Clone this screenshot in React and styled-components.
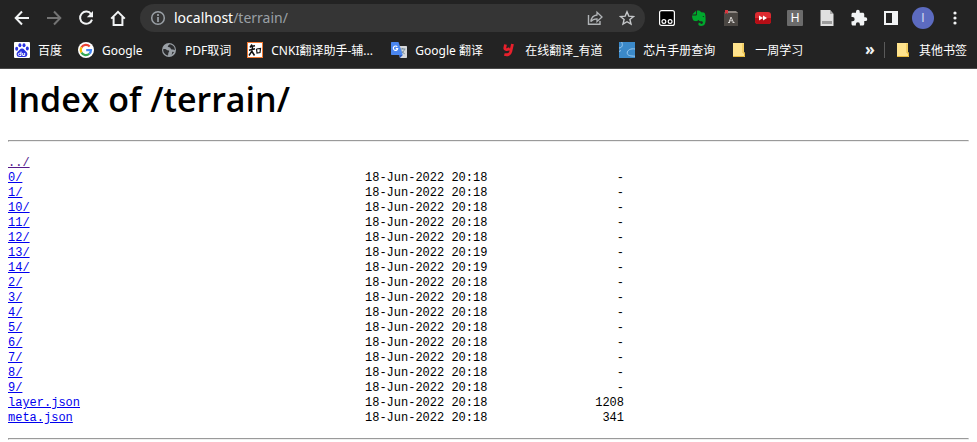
import React from 'react';
import styled, { createGlobalStyle } from 'styled-components';

const GlobalStyle = createGlobalStyle`
  body {
    margin: 0;
    background-color: #ffffff;
    color: #000000;
    font-family: 'Noto Sans', 'Noto Sans CJK SC', sans-serif;
  }
`;

const Chrome = styled.header`
  background-color: #232323;
  border-bottom: 1px solid #4a4a4a;
`;

const Toolbar = styled.div`
  display: flex;
  align-items: center;
  height: 36px;
  padding: 0 6px;
`;

const IconButton = styled.button`
  display: flex;
  flex: none;
  align-items: center;
  justify-content: center;
  width: 32px;
  height: 28px;
  padding: 0;
  border: 0;
  background: none;
  color: ${(props) => props.$color || '#f1f3f4'};
`;

const AddressBar = styled.div`
  display: flex;
  flex: 1;
  align-items: center;
  min-width: 0;
  height: 28px;
  margin: 0 6px;
  padding: 0 2px;
  border-radius: 14px;
  background-color: #353535;
`;

const Url = styled.a`
  flex: 1;
  color: #9aa0a6;
  font-size: 14px;
  line-height: 20px;
  text-decoration: none;
`;

const Host = styled.span`
  color: #ffffff;
`;

const Avatar = styled.span`
  width: 22px;
  border-radius: 50%;
  background-color: #5c6bc0;
  color: #d5d9f0;
  font-family: 'Liberation Sans', sans-serif;
  font-size: 12px;
  line-height: 22px;
`;

const HBadge = styled.span`
  width: 16px;
  border-radius: 1px;
  background-color: #6b6b6b;
  color: #ffffff;
  font-family: 'Liberation Sans', sans-serif;
  font-size: 12px;
  line-height: 16px;
`;

const BookmarksBar = styled.nav`
  display: flex;
  align-items: center;
  height: 28px;
  padding: 0 2px 4px 6px;
`;

const Bookmark = styled.a`
  display: flex;
  flex: none;
  align-items: center;
  gap: 8px;
  padding: 0 8px;
  color: #ffffff;
  font-size: 12px;
  line-height: 18px;
  text-decoration: none;
  white-space: nowrap;
`;

const BookmarkName = styled.span`
  min-width: ${(props) => props.$width}px;
  padding-top: 2px;
`;

const More = styled.button`
  flex: none;
  width: 20px;
  margin-left: auto;
  padding: 0 0 2px;
  border: 0;
  background: none;
  color: #f1f3f4;
  font-family: 'Noto Sans', sans-serif;
  font-size: 16px;
  font-weight: bold;
  line-height: 16px;
`;

const Divider = styled.span`
  flex: none;
  width: 1px;
  height: 16px;
  margin: 0 2px 0 4px;
  background-color: #5a5a5a;
`;

const Page = styled.main`
  padding: 8px;
`;

const Title = styled.h1`
  margin: 0;
  padding-top: 2px;
  font-family: 'Open Sans', sans-serif;
  font-size: 34px;
  font-weight: 600;
  line-height: 40px;
`;

const Rule = styled.hr`
  height: 0;
  margin: ${(props) => props.$top}px 0 13px;
  border: 1px solid;
  border-color: #9a9a9a #eeeeee #eeeeee #9a9a9a;
`;

const Listing = styled.table`
  width: 616px;
  border-collapse: collapse;
  table-layout: fixed;
  font-family: 'Liberation Mono', monospace;
  font-size: 12px;
  line-height: 13px;
`;

const Cell = styled.td`
  width: ${(props) => props.$width};
  height: 13px;
  padding: 2px 0 0;
  text-align: ${(props) => props.$align || 'left'};
  white-space: nowrap;
`;

const FileLink = styled.a`
  color: ${(props) => (props.$visited ? '#551a8b' : '#0000ee')};
`;

const Svg = ({ size = 16, box = 16, children }) => (
  <svg width={size} height={size} viewBox={`0 0 ${box} ${box}`} fill="none" aria-hidden="true">
    {children}
  </svg>
);

const BackIcon = () => (
  <Svg>
    <path d="M15 8H2M8 1.5 1.7 8 8 14.5" stroke="currentColor" strokeWidth="2" />
  </Svg>
);

const ForwardIcon = () => (
  <Svg>
    <path d="M1 8h13M8 1.5 14.3 8 8 14.5" stroke="currentColor" strokeWidth="2" />
  </Svg>
);

const ReloadIcon = () => (
  <Svg>
    <path d="M13.2 4.2A6.1 6.1 0 1 0 14 9.6" stroke="currentColor" strokeWidth="2" />
    <path d="M15 1v6.2H8.8z" fill="currentColor" />
  </Svg>
);

const HomeIcon = () => (
  <Svg>
    <path d="M1.2 8.6 8 1.8l6.8 6.8M3.6 7v8h8.8V7" stroke="currentColor" strokeWidth="2" />
  </Svg>
);

const InfoIcon = () => (
  <Svg>
    <circle cx="8" cy="8" r="6.3" stroke="currentColor" strokeWidth="1.5" />
    <path d="M8 7v5M8 4v2" stroke="currentColor" strokeWidth="1.7" />
  </Svg>
);

const ShareIcon = () => (
  <Svg>
    <path d="M1.5 5v9.3H13V11" stroke="currentColor" strokeWidth="1.4" />
    <path
      d="M10 2.3 15 7l-5 4.6V8.8C7.4 8.8 5.2 9.6 3.8 11.6 4.3 8 6.3 5.4 10 5z"
      stroke="currentColor"
      strokeWidth="1.3"
    />
  </Svg>
);

const StarIcon = () => (
  <Svg>
    <path
      d="m8 1.8 1.8 4.3 4.7.4-3.6 3 1.1 4.6L8 11.7 4 14.1l1.1-4.6-3.6-3 4.7-.4z"
      stroke="currentColor"
      strokeWidth="1.4"
    />
  </Svg>
);

const MonkeyIcon = () => (
  <Svg>
    <rect x=".6" y=".6" width="14.8" height="14.8" rx="2" fill="#000" stroke="#fff" strokeWidth="1.2" />
    <circle cx="4.9" cy="11.5" r="1.9" stroke="#fff" strokeWidth="1.2" />
    <circle cx="11.1" cy="11.5" r="1.9" stroke="#fff" strokeWidth="1.2" />
  </Svg>
);

const ElephantIcon = () => (
  <Svg>
    <path
      d="M5 .7 1.2 4.4h3.2c.5 0 .7-.2.7-.7zM5.9.5v4.1c0 .6-.3.9-.9.9H1c.1 2.8 1 5.2 2.6 5.5 1.8.3 3.2.2 3.8-1.3.5 1.2 1.5 1.4 2.8 1.5 1 0 1.7.5 1.7 1.4 0 .8-.5 1.3-1.3 1.3-.9 0-1.2-.4-1.2-1.2H7.6c-.8 2.2.4 3.3 2.6 3.3 3.5 0 4.4-2.3 4.4-6.4 0-3-.2-5.7-1-6.5-.7-.8-2.1-.7-3.5-.8C9.4.7 8 .2 5.9.5zm5.5 6.1c.9-1.1 1.7-.7 1.8.7z"
      fill="#00a82d"
    />
  </Svg>
);

const DictionaryIcon = () => (
  <Svg>
    <path d="M1 2h14v14H1z" fill="#4b4743" />
    <path d="M3 1h10l2 2H2z" fill="#8d8782" />
    <path d="M2 0h3v4L3.500 3 2 4z" fill="#d9363e" />
    <path d="M6 12.500 8 7l2.500 5.500M6.500 10.800h3M5 12.500h2M9.500 12.500h2" stroke="#d8d5d2" />
  </Svg>
);

const ForwardBadge = () => (
  <Svg>
    <rect y="2" width="16" height="12" rx="3" fill="#dc2a30" />
    <path d="M0 8h16v3c0 2-1 3-3 3H3c-2 0-3-1-3-3z" fill="#b50d15" />
    <path d="m4 5.500 4 2.500-4 2.500zM8 5.500 12 8l-4 2.500z" fill="#fff" />
  </Svg>
);

const PageIcon = () => (
  <Svg>
    <path d="M1.5 0H11l3.5 4v12h-13z" fill="#e0e0e0" />
    <path d="M11 0v4h3.5z" fill="#aaa" />
    <path d="M3 11h10v3H3z" fill="#9b9b9b" />
  </Svg>
);

const PuzzleIcon = () => (
  <Svg size={18} box={24}>
    <path
      d="M20.5 11H19V7c0-1.1-.9-2-2-2h-4V3.500a2.500 2.500 0 0 0-5 0V5H4c-1.100 0-2 .9-2 2v3.800h1.500a2.700 2.700 0 0 1 0 5.400H2V20c0 1.100.9 2 2 2h3.800v-1.500a2.700 2.700 0 0 1 5.400 0V22H17c1.100 0 2-.9 2-2v-4h1.500a2.500 2.500 0 0 0 0-5z"
      fill="currentColor"
    />
  </Svg>
);

const PanelIcon = () => (
  <Svg>
    <path fillRule="evenodd" d="M1 1h14v14H1zm2 2v10h6V3z" fill="currentColor" />
  </Svg>
);

const DotsIcon = () => (
  <Svg>
    <circle cx="8" cy="3" r="1.6" fill="currentColor" />
    <circle cx="8" cy="8" r="1.6" fill="currentColor" />
    <circle cx="8" cy="13" r="1.6" fill="currentColor" />
  </Svg>
);

const BaiduIcon = () => (
  <Svg>
    <rect width="16" height="16" rx="1" fill="#fff" />
    <g fill="#2a32e1">
      <ellipse cx="2.7" cy="6.7" rx="1.5" ry="2" />
      <ellipse cx="5.9" cy="3.2" rx="1.5" ry="2" />
      <ellipse cx="10" cy="3.2" rx="1.5" ry="2" />
      <ellipse cx="13.3" cy="6.6" rx="1.5" ry="2" />
      <path d="M8 6.500c2 0 2.800 2 4.300 3.300 1.900 1.700 1.200 5.200-1.500 5.200H5.200c-2.700 0-3.400-3.500-1.500-5.200C5.200 8.500 6 6.500 8 6.500z" />
    </g>
    <path d="M7 9.500v4H5.500a1 1 0 0 1 0-2.300H7M8.700 11v2.500h2V11" stroke="#fff" />
  </Svg>
);

const GoogleIcon = () => (
  <Svg>
    <circle cx="8" cy="8" r="8" fill="#fff" />
    <path d="M3.5 5.4A5.1 5.1 0 0 1 11.7 4.5" stroke="#ea4335" strokeWidth="2.2" />
    <path d="M3.5 5.4a5.1 5.1 0 0 0 0 5.2" stroke="#fbbc05" strokeWidth="2.2" />
    <path d="M3.5 10.6a5.1 5.1 0 0 0 7.8 1.2" stroke="#34a853" strokeWidth="2.2" />
    <path d="M11.3 11.8A5.1 5.1 0 0 0 13 8.2H8.2" stroke="#4285f4" strokeWidth="2.2" />
  </Svg>
);

const GlobeIcon = () => (
  <Svg>
    <circle cx="8" cy="8" r="7" fill="#9aa0a6" />
    <path
      d="M2.2 7.3c1.6-.5 3 .1 4 1l1.7.2c.8 1-.2 1.600-.5 2.300l-.4 2.700C4 13 2 10.500 2.200 7.300zM8.600 2.300c-.3 1-1.900 1.100-1.800 2.500.8.800 2.300.1 2.700 1.200.2 1.400 1.400 1.700 2.700 1.500l1.600.7c.2-2.900-1.700-5.500-5.200-5.900zM11.400 9.800l1.700.1-2.500 3.100z"
      fill="#2b2c2e"
    />
  </Svg>
);

const CnkiIcon = () => (
  <Svg>
    <rect x=".5" y=".5" width="15" height="15" fill="#fff" stroke="#f47a32" />
    <path
      d="M5 2.500 3 5.500M4 4.500l4-.7M2 8.300l6-1.500M5.500 4.500 5 9l-3 4.500M5 9.500l2.500 4"
      stroke="#111"
      strokeWidth="1.5"
    />
    <path d="m9.500 7 .5 4 3-.5.5-4-4 .5" stroke="#111" strokeWidth="1.2" />
  </Svg>
);

const TranslateIcon = () => (
  <Svg>
    <path d="M6 4h9c.6 0 1 .4 1 1v10c0 .6-.4 1-1 1H9z" fill="#d5d7da" />
    <path d="M9 7h5.500M11.700 6v1M13.500 7.200c-.5 2-2 3.500-3.500 4.300M10.200 8.500c.8 1.500 2 2.500 3.500 3.300" stroke="#728a98" />
    <path d="M1 0h6.500l4.300 13H1c-.6 0-1-.4-1-1V1c0-.6.4-1 1-1z" fill="#4a86f0" />
    <path d="m9 16 2.800-3H8z" fill="#2b59c3" />
    <path d="M6.300 4.900a2.200 2.200 0 1 0 .4 1.700H4.800" stroke="#fff" strokeWidth="1.1" />
  </Svg>
);

const YoudaoIcon = () => (
  <Svg>
    <path d="M4.500 2.500 3.800 6c-.3 1.800 2.600 2.200 5 .5M11.500 2l-1.700 7.500c-.6 2.800-3 3.800-6.500 3" stroke="#e8202c" strokeWidth="2.800" />
  </Svg>
);

const ChipIcon = () => (
  <Svg>
    <rect width="16" height="16" fill="#3b89c9" />
    <path d="M0 6c3-.2 4.200-2.500 2.700-6M16 7c-4-.8-8 1-7.800 4.200.2 2.300 3 2.800 7.800 3M0 9.500l2-1" stroke="#9ccaf0" />
  </Svg>
);

const FolderIcon = () => (
  <Svg>
    <path d="M2 1h11v9.500h1V15H2z" fill="#ffe38d" />
    <path d="M2 14.500h11.500V11H12V1.500" stroke="#e6b93a" />
  </Svg>
);

const extensions = [
  { label: 'Tampermonkey', icon: <MonkeyIcon /> },
  { label: 'Evernote', icon: <ElephantIcon /> },
  { label: 'Dictionary', icon: <DictionaryIcon /> },
  { label: 'Speed', icon: <ForwardBadge /> },
  { label: 'H', icon: <HBadge>H</HBadge> },
  { label: 'Page', icon: <PageIcon /> },
  { label: 'Extensions', icon: <PuzzleIcon /> },
  { label: 'Side panel', icon: <PanelIcon /> },
  { label: 'Profile', icon: <Avatar>I</Avatar> },
  { label: 'Menu', icon: <DotsIcon /> },
];

const bookmarks = [
  { name: '百度', width: 24, icon: <BaiduIcon /> },
  { name: 'Google', width: 43, icon: <GoogleIcon /> },
  { name: 'PDF取词', width: 46, icon: <GlobeIcon /> },
  { name: 'CNKI翻译助手-辅...', width: 104, icon: <CnkiIcon /> },
  { name: 'Google 翻译', width: 70, icon: <TranslateIcon /> },
  { name: '在线翻译_有道', width: 78, icon: <YoudaoIcon /> },
  { name: '芯片手册查询', width: 72, icon: <ChipIcon /> },
  { name: '一周学习', width: 48, icon: <FolderIcon /> },
];

const files = [
  { name: '../' },
  { name: '0/', date: '18-Jun-2022 20:18', size: '-' },
  { name: '1/', date: '18-Jun-2022 20:18', size: '-' },
  { name: '10/', date: '18-Jun-2022 20:18', size: '-' },
  { name: '11/', date: '18-Jun-2022 20:18', size: '-' },
  { name: '12/', date: '18-Jun-2022 20:18', size: '-' },
  { name: '13/', date: '18-Jun-2022 20:19', size: '-' },
  { name: '14/', date: '18-Jun-2022 20:19', size: '-' },
  { name: '2/', date: '18-Jun-2022 20:18', size: '-' },
  { name: '3/', date: '18-Jun-2022 20:18', size: '-' },
  { name: '4/', date: '18-Jun-2022 20:18', size: '-' },
  { name: '5/', date: '18-Jun-2022 20:18', size: '-' },
  { name: '6/', date: '18-Jun-2022 20:18', size: '-' },
  { name: '7/', date: '18-Jun-2022 20:18', size: '-' },
  { name: '8/', date: '18-Jun-2022 20:18', size: '-' },
  { name: '9/', date: '18-Jun-2022 20:18', size: '-' },
  { name: 'layer.json', date: '18-Jun-2022 20:18', size: '1208' },
  { name: 'meta.json', date: '18-Jun-2022 20:18', size: '341' },
];

const BrowserToolbar = () => (
  <Toolbar>
    <IconButton aria-label="Back"><BackIcon /></IconButton>
    <IconButton aria-label="Forward" $color="#747474"><ForwardIcon /></IconButton>
    <IconButton aria-label="Reload"><ReloadIcon /></IconButton>
    <IconButton aria-label="Home"><HomeIcon /></IconButton>
    <AddressBar>
      <IconButton aria-label="Site information" $color="#9aa0a6"><InfoIcon /></IconButton>
      <Url href="#"><Host>localhost</Host>/terrain/</Url>
      <IconButton aria-label="Share" $color="#b0b3b6"><ShareIcon /></IconButton>
      <IconButton aria-label="Bookmark this page" $color="#c6c8ca"><StarIcon /></IconButton>
    </AddressBar>
    {extensions.map((item) => (
      <IconButton key={item.label} aria-label={item.label}>{item.icon}</IconButton>
    ))}
  </Toolbar>
);

const Bookmarks = () => (
  <BookmarksBar>
    {bookmarks.map((item) => (
      <Bookmark key={item.name} href="#">
        {item.icon}
        <BookmarkName $width={item.width}>{item.name}</BookmarkName>
      </Bookmark>
    ))}
    <More aria-label="More bookmarks">»</More>
    <Divider />
    <Bookmark href="#">
      <FolderIcon />
      <BookmarkName $width={48}>其他书签</BookmarkName>
    </Bookmark>
  </BookmarksBar>
);

const FileRow = ({ file }) => (
  <tr>
    <Cell $width="357px"><FileLink href="#" $visited={file.name === '../'}>{file.name}</FileLink></Cell>
    <Cell $width="124px">{file.date}</Cell>
    <Cell $align="right">{file.size}</Cell>
  </tr>
);

const App = () => (
  <React.Fragment>
    <GlobalStyle />
    <Chrome>
      <BrowserToolbar />
      <Bookmarks />
    </Chrome>
    <Page>
      <Title>Index of /terrain/</Title>
      <Rule $top={21} />
      <Listing>
        <tbody>
          {files.map((file) => <FileRow key={file.name} file={file} />)}
        </tbody>
      </Listing>
      <Rule $top={13} />
    </Page>
  </React.Fragment>
);

export default App;
